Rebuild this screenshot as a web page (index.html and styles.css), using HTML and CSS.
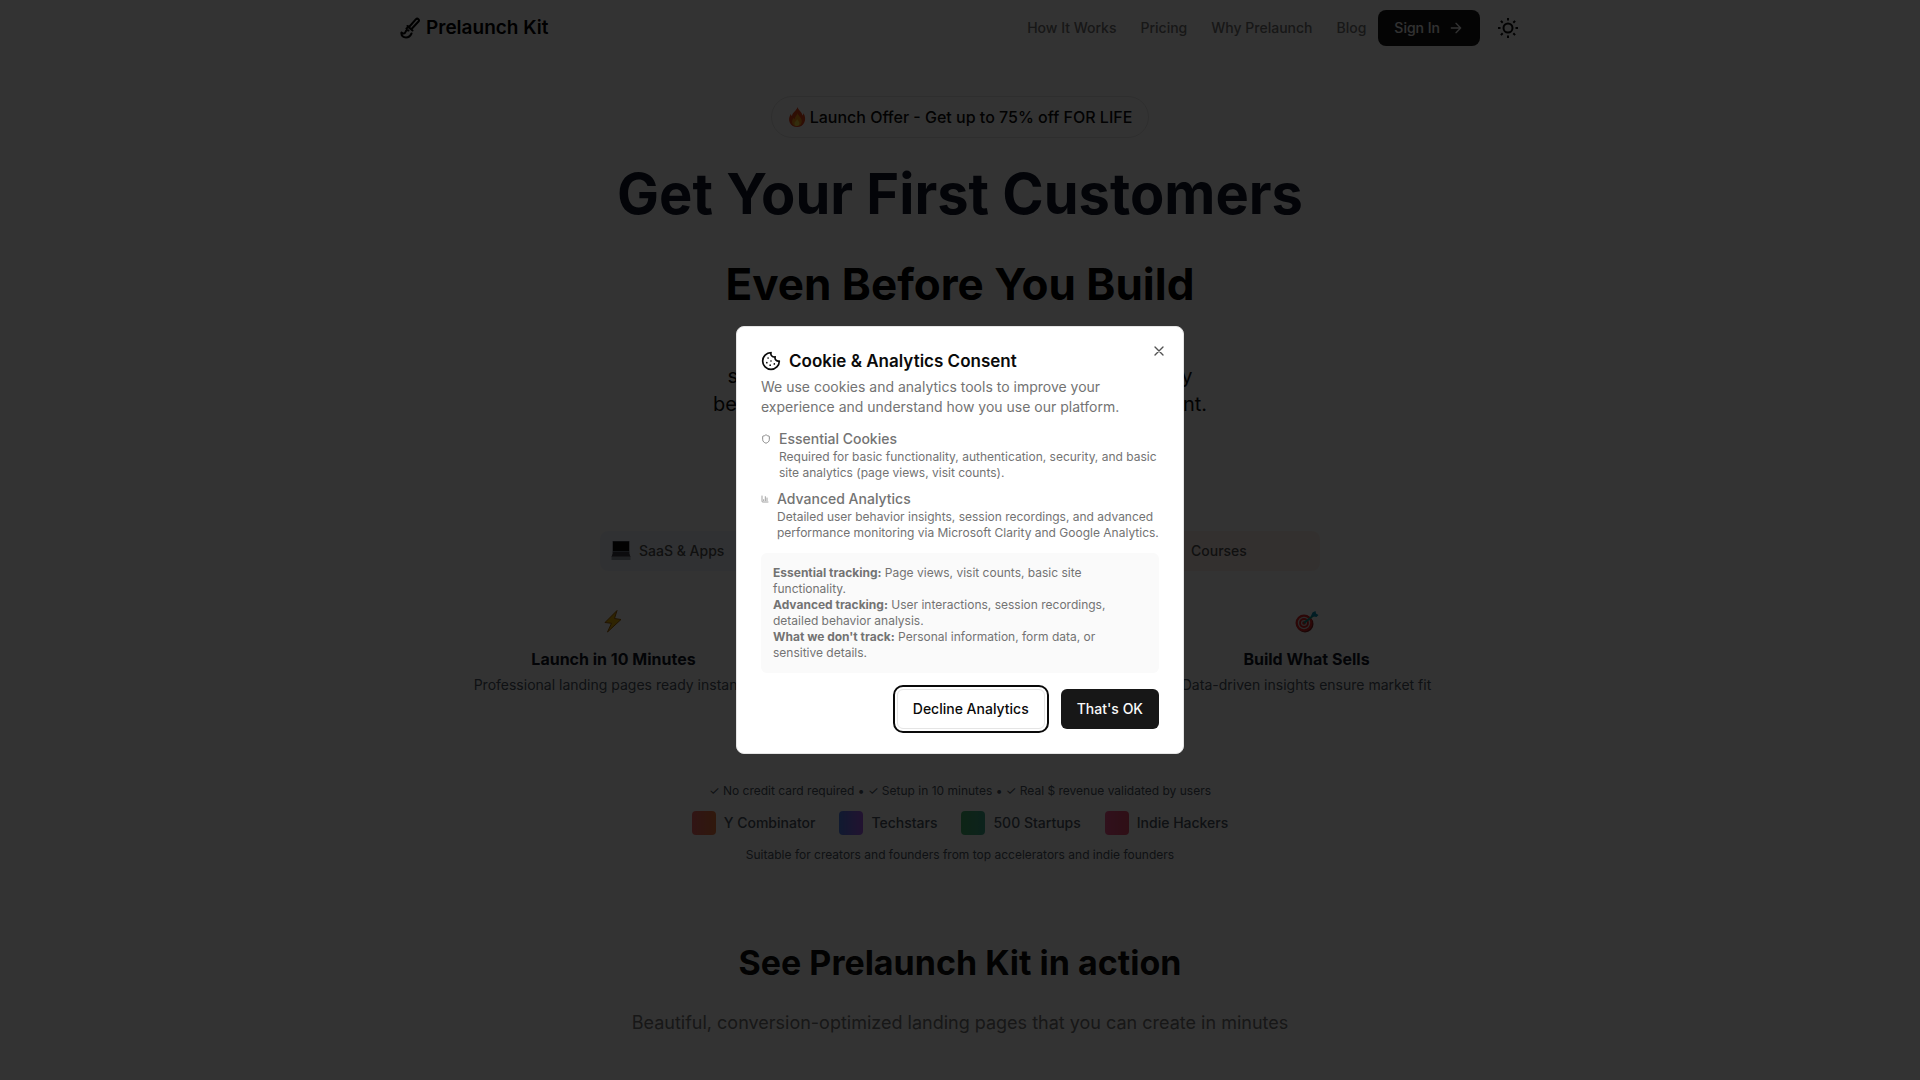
FILE: index.html
```html
<!DOCTYPE html>
<html lang="en">
<head>
<meta charset="utf-8">
<meta name="viewport" content="width=device-width, initial-scale=1">
<title>Prelaunch Kit</title>
<link rel="stylesheet" href="styles.css">
</head>
<body>
<header class="header">
  <a class="brand" href="#">
    <svg class="brand-icon" viewBox="0 0 20 22" fill="none" stroke="currentColor" stroke-width="2" stroke-linecap="round" stroke-linejoin="round" aria-hidden="true"><path d="M9.500 9.500 16 2.200a1.700 1.700 0 0 1 2.500 2.300L12 11.500M7.500 9l5 4.500M6.500 11.500l3-2.500M1.500 15.500c-.6 3.500 2 5 4.500 5 3 0 4.500-1.800 5.500-4M1.500 15.500c1.500 1.800 3.500 1 4-.5.500-1.600 1.500-2.300 3-1.500"/></svg>
    Prelaunch Kit
  </a>
  <nav class="nav">
    <a href="#">How It Works</a>
    <a href="#">Pricing</a>
    <a href="#">Why Prelaunch</a>
    <a href="#">Blog</a>
  </nav>
  <button class="sign-in" type="button">Sign In
    <svg width="16" height="16" viewBox="0 0 24 24" fill="none" stroke="currentColor" stroke-width="2" stroke-linecap="round" stroke-linejoin="round" aria-hidden="true"><path d="M5 12h14M12 5l7 7-7 7"/></svg>
  </button>
  <button class="theme" type="button" aria-label="Toggle theme">
    <svg width="24" height="24" viewBox="0 0 24 24" fill="none" stroke="currentColor" stroke-width="2" aria-hidden="true"><circle cx="12" cy="12" r="4.500"/><path d="M12 2v2.500M12 19.500V22M2 12h2.500M19.500 12H22M4.900 4.900l1.800 1.800M17.300 17.300l1.800 1.800M4.900 19.100l1.800-1.800M17.300 6.700l1.800-1.800"/></svg>
  </button>
</header>

<main>
  <section class="hero">
    <p class="offer">
      <svg width="18" height="20" viewBox="0 0 18 20" aria-hidden="true"><path fill="#e8451c" d="M9.500 0c.5 3 4.500 5 5 8.500.6-.5.900-1.500.8-2.500 2 3 2.500 6.500 1 9.500C15 18.500 12 20 9 20s-6-1.500-7.300-4.500c-1.300-3-.4-6 1.100-8.500.2 1 .6 1.800 1.200 2.200C4 5.500 8.500 4 9.500 0z"/><path fill="#fb9a1c" d="M9.500 6c.3 2.500 3.800 4 4.200 7.500.4 3.500-1.700 5.700-4.700 5.700s-5.300-2-4.900-5c.2-1.500.9-2.700 1.600-3.500.1.900.5 1.500 1 1.800C6.500 10 9 8.500 9.500 6z"/><path fill="#fde047" d="M9.200 12c.3 1.500 2.200 2.300 2.200 4.300 0 1.700-1 2.800-2.400 2.800s-2.500-1-2.500-2.600c0-1.900 2.300-2.700 2.700-4.500z"/></svg>
      Launch Offer - Get up to 75% off FOR LIFE
    </p>
    <h1>Get Your First Customers</h1>
    <p class="headline-second">Even Before You Build</p>
    <p class="lead">start with real buyers so every launch feels ready<br>benefits that test demands before you build content.</p>
    <ul class="chips">
      <li class="chip chip-blue">
        <svg width="20" height="20" viewBox="0 0 20 20" aria-hidden="true"><path fill="#6b7280" d="M1.500 0h17v12h-17z"/><path fill="#0a0a0a" d="M2 .5h16v9.500H2z"/><path fill="#3f3f46" d="M2 11h16l1.500 5H.5z"/><path fill="#9ca3af" d="M.5 15.500h19V19H.5z"/></svg>
        SaaS &amp; Apps
      </li>
      <li class="chip chip-orange"><span class="chip-gap"></span>Courses</li>
    </ul>
    <div class="features">
      <article class="feature">
        <svg width="28" height="28" viewBox="0 0 28 28" aria-hidden="true"><path fill="#eab308" stroke="#a16207" stroke-width="1" stroke-linejoin="round" d="M17 3.500 5 15.500l6.500.8L7.500 25 21 12.500l-6.500-1z"/></svg>
        <h2>Launch in 10 Minutes</h2>
        <p>Professional landing pages ready instantly</p>
      </article>
      <article class="feature">
        <svg width="28" height="28" viewBox="0 0 28 28" aria-hidden="true"><ellipse cx="12" cy="17" rx="8.500" ry="8.500" fill="#7f1d1d"/><circle cx="11" cy="16" r="8.500" fill="#dc2626"/><circle cx="11" cy="16" r="6.200" fill="#d4d4d4"/><circle cx="11" cy="16" r="4.900" fill="#dc2626"/><circle cx="11" cy="16" r="3" fill="#d4d4d4"/><circle cx="11" cy="16" r="1.800" fill="#dc2626"/><path stroke="#0d9488" stroke-width="2" d="M11 16 21 8"/><path fill="#0891b2" d="m18 9 1.500-3.500 3-1.500.5 2.500 2.500 1.500-2 2z"/></svg>
        <h2>Build What Sells</h2>
        <p>Data-driven insights ensure market fit</p>
      </article>
    </div>
    <p class="small-note">✓ No credit card required • ✓ Setup in 10 minutes • ✓ Real $ revenue validated by users</p>
    <ul class="communities">
      <li><span class="swatch swatch-orange"></span>Y Combinator</li>
      <li><span class="swatch swatch-violet"></span>Techstars</li>
      <li><span class="swatch swatch-green"></span>500 Startups</li>
      <li><span class="swatch swatch-pink"></span>Indie Hackers</li>
    </ul>
    <p class="small-note">Suitable for creators and founders from top accelerators and indie founders</p>
  </section>

  <section class="showcase">
    <h2>See Prelaunch Kit in action</h2>
    <p>Beautiful, conversion-optimized landing pages that you can create in minutes</p>
  </section>
</main>

<div class="overlay">
  <section class="dialog" role="dialog" aria-modal="true" aria-labelledby="consent-title">
    <button class="close" type="button" aria-label="Close">
      <svg width="16" height="16" viewBox="0 0 24 24" fill="none" stroke="currentColor" stroke-width="2" stroke-linecap="round" aria-hidden="true"><path d="M18 6 6 18M6 6l12 12"/></svg>
    </button>
    <h2 class="dialog-title" id="consent-title">
      <svg width="20" height="20" viewBox="0 0 24 24" fill="none" stroke="currentColor" stroke-width="2" stroke-linecap="round" stroke-linejoin="round" aria-hidden="true"><path d="M12 2a10 10 0 1 0 10 10 4 4 0 0 1-5-5 4 4 0 0 1-5-5M8.500 8.500v.01M16 15.500v.01M12 12v.01M11 17v.01M7 14v.01"/></svg>
      Cookie &amp; Analytics Consent
    </h2>
    <p class="dialog-text">We use cookies and analytics tools to improve your experience and understand how you use our platform.</p>
    <div class="items">
      <div class="item">
        <svg width="10" height="20" viewBox="0 0 24 24" fill="none" stroke="currentColor" stroke-width="2" stroke-linejoin="round" aria-hidden="true"><path d="M20 13c0 5-3.500 7.500-7.660 8.950a1 1 0 0 1-.67-.01C7.500 20.500 4 18 4 13V6a1 1 0 0 1 1-1c2 0 4.500-1.200 6.240-2.720a1.170 1.170 0 0 1 1.520 0C14.510 3.810 17 5 19 5a1 1 0 0 1 1 1z"/></svg>
        <div>
          <h3>Essential Cookies</h3>
          <p>Required for basic functionality, authentication, security, and basic site analytics (page views, visit counts).</p>
        </div>
      </div>
      <div class="item">
        <svg width="8" height="20" viewBox="0 0 24 24" fill="none" stroke="currentColor" stroke-width="2" stroke-linecap="round" stroke-linejoin="round" aria-hidden="true"><path d="M3 3v16a2 2 0 0 0 2 2h16M18 17V9M13 17V5M8 17v-3"/></svg>
        <div>
          <h3>Advanced Analytics</h3>
          <p>Detailed user behavior insights, session recordings, and advanced performance monitoring via Microsoft Clarity and Google Analytics.</p>
        </div>
      </div>
    </div>
    <div class="tracking">
      <p><strong>Essential tracking:</strong> Page views, visit counts, basic site functionality.</p>
      <p><strong>Advanced tracking:</strong> User interactions, session recordings, detailed behavior analysis.</p>
      <p><strong>What we don't track:</strong> Personal information, form data, or sensitive details.</p>
    </div>
    <div class="actions">
      <button class="decline" type="button">Decline Analytics</button>
      <button class="accept" type="button">That's OK</button>
    </div>
  </section>
</div>
</body>
</html>
```
FILE: styles.css
```css
* { box-sizing: border-box; }

body {
  margin: 0;
  min-height: 100vh;
  overflow: hidden;
  background: #fff;
  color: #0a0a0a;
  font-family: Inter, "Liberation Sans", sans-serif;
  font-size: 14px;
  line-height: 20px;
}

h1, h2, h3, p, ul { margin: 0; padding: 0; }
ul { list-style: none; }
a { color: inherit; text-decoration: none; }
svg { flex: none; }

button {
  border: 0;
  background: none;
  color: inherit;
  font: inherit;
  font-weight: 500;
}

/* Header */
.header {
  display: flex;
  align-items: center;
  max-width: 1120px;
  height: 56px;
  margin: 0 auto;
}

.brand {
  display: flex;
  align-items: center;
  gap: 6px;
  margin-right: auto;
  color: #000;
  font-size: 19px;
  font-weight: 600;
}
.brand-icon { width: 20px; height: 22px; }

.nav {
  display: flex;
  gap: 24px;
  margin-right: 12px;
  color: #737373;
  font-weight: 500;
}

.sign-in {
  display: flex;
  align-items: center;
  gap: 8px;
  height: 36px;
  margin-right: 16px;
  padding: 0 16px;
  border-radius: 8px;
  background: #171717;
  color: #fafafa;
}

.theme { display: flex; padding: 0; }

/* Hero */
.hero {
  display: flex;
  flex-direction: column;
  align-items: center;
  max-width: 1024px;
  margin: 0 auto;
  padding-top: 40px;
  text-align: center;
}

.offer {
  display: flex;
  align-items: center;
  gap: 4px;
  padding: 8px 16px;
  border: 1px solid #e5e5e5;
  border-radius: 24px;
  font-size: 16px;
  font-weight: 500;
  line-height: 24px;
}

h1 {
  margin-top: 16px;
  color: #0f172a;
  font-size: 56px;
  font-weight: 700;
  line-height: 80px;
}

.headline-second {
  margin-top: 16px;
  color: #000;
  font-size: 44px;
  font-weight: 700;
  line-height: 68px;
}

.lead {
  margin-top: 44px;
  font-size: 20px;
  line-height: 28px;
}

.chips {
  display: flex;
  justify-content: space-between;
  width: 100%;
  max-width: 720px;
  margin-top: 113px;
}

.chip {
  display: flex;
  align-items: center;
  gap: 8px;
  width: 168px;
  height: 40px;
  padding: 0 11px;
  border-radius: 8px;
  color: #525252;
  font-weight: 500;
}
.chip-blue { background: #f1f6fd; }
.chip-orange { background: #fff1ec; }
.chip-gap { width: 20px; }

.features {
  display: flex;
  justify-content: space-between;
  width: 100%;
  margin-top: 36px;
}

.feature {
  display: flex;
  flex-direction: column;
  align-items: center;
  width: 331px;
}
.feature h2 {
  margin-top: 12px;
  color: #111827;
  font-size: 16px;
  font-weight: 700;
  line-height: 24px;
}
.feature p {
  margin-top: 4px;
  color: #4b5563;
}

.small-note {
  color: #4b5563;
  font-size: 12px;
  line-height: 16px;
}
.features + .small-note { margin-top: 88px; }

.communities {
  display: flex;
  gap: 24px;
  margin: 12px 0;
  color: #4b5563;
  font-weight: 500;
}
.communities li {
  display: flex;
  align-items: center;
  gap: 8px;
  height: 24px;
}

.swatch {
  width: 24px;
  height: 24px;
  border-radius: 4px;
  opacity: 0.8;
}
.swatch-orange { background: linear-gradient(90deg, #ef4444, #ea580c); }
.swatch-violet { background: linear-gradient(90deg, #2563eb, #9333ea); }
.swatch-green { background: linear-gradient(90deg, #16a34a, #0d9470); }
.swatch-pink { background: linear-gradient(90deg, #ec2a70, #e11d48); }

/* Showcase */
.showcase {
  padding-top: 80px;
  text-align: center;
}
.showcase h2 {
  color: #0a0a0a;
  font-size: 34px;
  font-weight: 700;
  line-height: 40px;
}
.showcase p {
  margin-top: 26px;
  color: #737373;
  font-size: 18px;
  line-height: 28px;
}

/* Consent dialog */
.overlay {
  position: fixed;
  inset: 0;
  display: flex;
  align-items: center;
  justify-content: center;
  background: rgba(0, 0, 0, 0.8);
}

.dialog {
  position: relative;
  width: 100%;
  max-width: 448px;
  padding: 24px;
  border: 1px solid #e5e5e5;
  border-radius: 8px;
  background: #fff;
  color: #737373;
}

.close {
  position: absolute;
  top: 16px;
  right: 16px;
  display: flex;
  padding: 0;
  color: #525252;
}

.dialog-title {
  display: flex;
  align-items: center;
  gap: 8px;
  color: #0a0a0a;
  font-size: 17px;
  font-weight: 600;
  line-height: 20px;
}
.dialog-text { margin-top: 6px; }

.items {
  display: flex;
  flex-direction: column;
  gap: 8px;
  margin: 12px 0;
}
.item {
  display: flex;
  align-items: flex-start;
  gap: 8px;
  font-size: 12px;
  line-height: 16px;
}
.item h3 {
  font-size: 14px;
  font-weight: 500;
  line-height: 20px;
}

.tracking {
  padding: 12px;
  border-radius: 6px;
  background: #fafafa;
  font-size: 12px;
  line-height: 16px;
}

.actions {
  display: flex;
  justify-content: flex-end;
  gap: 16px;
  margin-top: 16px;
}
.actions button {
  height: 40px;
  padding: 0 16px;
  border-radius: 6px;
}
.actions .decline {
  padding: 0 15px;
  border: 1px solid #e5e5e5;
  outline: 2px solid #0a0a0a;
  outline-offset: 2px;
  color: #0a0a0a;
}
.actions .accept {
  background: #171717;
  color: #fafafa;
}
```
